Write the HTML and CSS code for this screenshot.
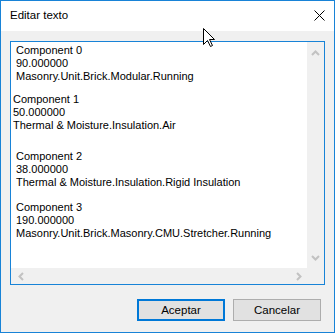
FILE: index.html
```html
<!DOCTYPE html>
<html lang="es">
<head>
  <meta charset="UTF-8" />
  <title>Editar texto</title>
  <link rel="stylesheet" href="styles.css">
</head>
<body>
  <div class="window">
    <div class="titlebar">
      <span class="title">Editar texto</span>
      <svg class="close" width="11" height="11" viewBox="0 0 11 11">
        <path d="M0.5 0.5 L10.5 10.5 M10.5 0.5 L0.5 10.5" stroke="#000" stroke-width="1" fill="none"/>
      </svg>
    </div>

    <div class="content">
      <div class="textbox">
        <div class="textarea">
          <div class="text">
            <div class="group">
              <div>Component 0</div>
              <div>90.000000</div>
              <div>Masonry.Unit.Brick.Modular.Running</div>
            </div>
            <div class="group shifted">
              <div>Component 1</div>
              <div>50.000000</div>
              <div>Thermal &amp; Moisture.Insulation.Air</div>
            </div>
            <div class="group g2">
              <div>Component 2</div>
              <div>38.000000</div>
              <div>Thermal &amp; Moisture.Insulation.Rigid Insulation</div>
            </div>
            <div class="group g3">
              <div>Component 3</div>
              <div>190.000000</div>
              <div>Masonry.Unit.Brick.Masonry.CMU.Stretcher.Running</div>
            </div>
          </div>
          <div class="vscroll">
            <svg width="9" height="6" viewBox="0 0 9 6"><polyline points="1,5 4.5,1.5 8,5" fill="none" stroke="#c2c2c2" stroke-width="2"/></svg>
            <svg width="9" height="6" viewBox="0 0 9 6"><polyline points="1,1 4.5,4.5 8,1" fill="none" stroke="#c2c2c2" stroke-width="2"/></svg>
          </div>
        </div>
        <div class="hrow">
          <div class="hscroll">
            <svg width="6" height="9" viewBox="0 0 6 9"><polyline points="5,1 1.5,4.5 5,8" fill="none" stroke="#c2c2c2" stroke-width="2"/></svg>
            <svg width="6" height="9" viewBox="0 0 6 9"><polyline points="1,1 4.5,4.5 1,8" fill="none" stroke="#c2c2c2" stroke-width="2"/></svg>
          </div>
          <div class="corner"></div>
        </div>
      </div>

      <div class="buttons">
        <button class="btn primary">Aceptar</button>
        <button class="btn">Cancelar</button>
      </div>
    </div>

    <!-- mouse pointer -->
    <svg class="cursor" width="13" height="20" viewBox="0 0 13 20">
      <path d="M0.5 0.5 L0.5 16.5 L4.5 12.5 L7.5 18.5 L9.5 17.5 L6.5 11.5 L11.5 11.5 Z" fill="#fff" stroke="#000" stroke-width="1"/>
    </svg>
  </div>
</body>
</html>
```

FILE: styles.css
```css
body {
  margin: 0;
  padding: 0;
  font-family: 'Liberation Sans', Arial, sans-serif;
  font-size: 11px;
  color: #000;
  background: #fff;
}

.window {
  position: relative;
  width: 333px;
  height: 331px;
  border: 1px solid #1883d7;
  background: #f0f0f0;
  display: flex;
  flex-direction: column;
}

.titlebar {
  height: 30px;
  background: #fff;
  display: flex;
  align-items: center;
  justify-content: space-between;
  padding: 0 9px 0 9px;
}

.title {
  font-size: 11.5px;
  margin-top: -2px;
}

.close {
  display: block;
  margin-top: -1px;
}

.content {
  flex: 1;
  padding: 10px 9px 0 9px;
  display: flex;
  flex-direction: column;
}

.textbox {
  width: 313px;
  height: 242px;
  border: 1px solid #1883d7;
  display: flex;
  flex-direction: column;
}

.textarea {
  flex: 1;
  display: flex;
  min-height: 0;
}

.text {
  flex: 1;
  background: #fff;
  padding: 2px 0 0 5px;
  line-height: 13px;
  white-space: nowrap;
  overflow: hidden;
}

.group.shifted {
  margin-top: 10px;
  margin-left: -3px;
}

.group.g2 {
  margin-top: 18px;
}

.group.g3 {
  margin-top: 12px;
}

.vscroll {
  width: 17px;
  background: #f0f0f0;
  display: flex;
  flex-direction: column;
  justify-content: space-between;
  align-items: center;
  padding: 8px 0 7px;
}

.vscroll svg,
.hscroll svg {
  display: block;
}

.hrow {
  height: 16px;
  display: flex;
}

.hscroll {
  flex: 1;
  display: flex;
  align-items: center;
  justify-content: space-between;
  padding: 0 5px 0 7px;
}

.corner {
  width: 17px;
}

.buttons {
  display: flex;
  justify-content: flex-end;
  gap: 8px;
  margin-top: 14px;
  padding-right: 4px;
}

.btn {
  width: 88px;
  height: 22px;
  padding: 0;
  font-family: 'Liberation Sans', Arial, sans-serif;
  font-size: 11.5px;
  color: #000;
  background: #e1e1e1;
  border: 1px solid #adadad;
  border-radius: 0;
}

.btn.primary {
  border: 2px solid #0078d7;
}

.cursor {
  position: absolute;
  left: 202px;
  top: 27px;
}
```
